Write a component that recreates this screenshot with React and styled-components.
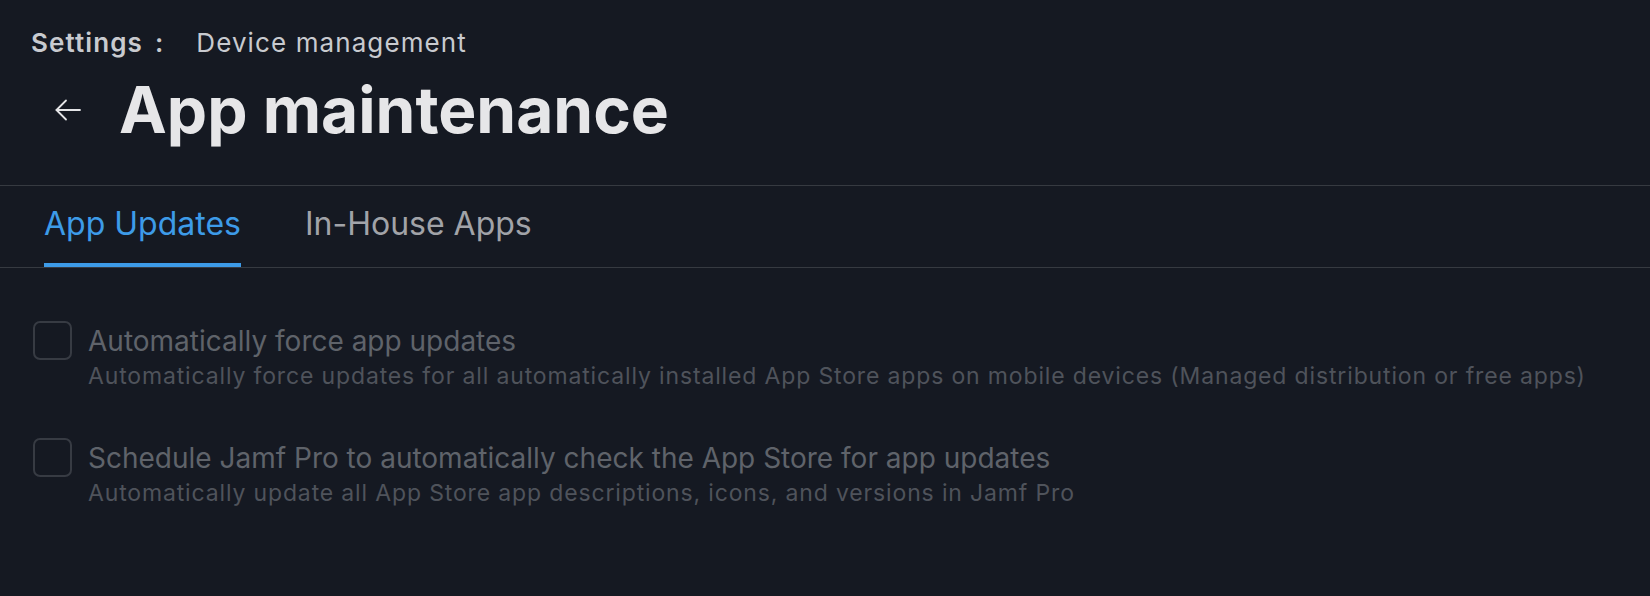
import React, { useState } from 'react';
import styled, { createGlobalStyle } from 'styled-components';

const GlobalStyle = createGlobalStyle`
  html, body {
    margin: 0;
    padding: 0;
    background: #151922;
  }
  body {
    font-family: Inter, "Noto Sans", sans-serif;
    color: #e4e5e7;
  }
`;

const Page = styled.div`
  min-height: 596px;
  background: #151922;
`;

const Header = styled.header`
  height: 186px;
  padding: 27px 0 0 31px;
  box-sizing: border-box;
  border-bottom: 1px solid #363a41;
`;

const Breadcrumb = styled.div`
  display: flex;
  align-items: center;
  font-size: 26px;
  line-height: 32px;
  letter-spacing: 1.1px;
  color: #c8cacf;
`;

const Crumb = styled.span`
  font-weight: ${p => (p.$strong ? 600 : 400)};
`;

const Sep = styled.span`
  margin: 0 32px 0 12px;
  font-weight: 600;
`;

const TitleRow = styled.div`
  display: flex;
  align-items: center;
  gap: 38px;
  margin-top: 12px;
  padding-left: 24px;
`;

const BackButton = styled.button`
  display: flex;
  align-items: center;
  justify-content: center;
  width: 26px;
  height: 26px;
  padding: 0;
  border: none;
  background: none;
  color: #e4e5e7;
  cursor: pointer;
`;

const Title = styled.h1`
  margin: 0;
  font-size: 64px;
  line-height: 78px;
  font-weight: 700;
  color: #e6e6e8;
`;

const Tabs = styled.nav`
  display: flex;
  gap: 64px;
  padding-left: 44px;
  border-bottom: 1px solid #363a41;
`;

const Tab = styled.button`
  position: relative;
  padding: 18px 0 23px;
  border: none;
  background: none;
  font-family: inherit;
  font-size: 32px;
  line-height: 40px;
  color: ${p => (p.$active ? '#3d9be8' : '#a1a3a8')};
  cursor: pointer;

  &::after {
    content: '';
    position: absolute;
    left: 0;
    right: 0;
    bottom: 0;
    height: 4px;
    background: ${p => (p.$active ? '#3d9be8' : 'transparent')};
  }
`;

const Options = styled.div`
  display: flex;
  flex-direction: column;
  gap: 47px;
  padding: 53px 0 0 33px;
`;

const Option = styled.label`
  display: flex;
  align-items: flex-start;
  gap: 16px;
  cursor: not-allowed;
`;

const Box = styled.span`
  flex: none;
  width: 39px;
  height: 39px;
  box-sizing: border-box;
  border: 2px solid #373b43;
  border-radius: 7px;
`;

const OptionText = styled.div`
  display: flex;
  flex-direction: column;
`;

const OptionLabel = styled.span`
  font-size: 28px;
  line-height: 40px;
  color: #5f636a;
`;

const OptionHint = styled.span`
  font-size: 23px;
  line-height: 30px;
  letter-spacing: 0.85px;
  color: #4f535b;
`;

const ArrowLeft = () => (
  <svg width="26" height="22" viewBox="0 0 26 22" fill="none" stroke="currentColor" strokeWidth="1.8" strokeLinecap="round" strokeLinejoin="round">
    <path d="M25 11H1.5" />
    <path d="M11 1.5L1.5 11L11 20.5" />
  </svg>
);

const options = [
  {
    label: 'Automatically force app updates',
    hint: 'Automatically force updates for all automatically installed App Store apps on mobile devices (Managed distribution or free apps)',
  },
  {
    label: 'Schedule Jamf Pro to automatically check the App Store for app updates',
    hint: 'Automatically update all App Store app descriptions, icons, and versions in Jamf Pro',
  },
];

export default function App() {
  const [tab, setTab] = useState('updates');
  return (
    <Page>
      <GlobalStyle />
      <Header>
        <Breadcrumb>
          <Crumb $strong>Settings</Crumb>
          <Sep>:</Sep>
          <Crumb>Device management</Crumb>
        </Breadcrumb>
        <TitleRow>
          <BackButton aria-label="Back">
            <ArrowLeft />
          </BackButton>
          <Title>App maintenance</Title>
        </TitleRow>
      </Header>
      <Tabs>
        <Tab $active={tab === 'updates'} onClick={() => setTab('updates')}>App Updates</Tab>
        <Tab $active={tab === 'inhouse'} onClick={() => setTab('inhouse')}>In-House Apps</Tab>
      </Tabs>
      <Options>
        {options.map(o => (
          <Option key={o.label}>
            <Box />
            <OptionText>
              <OptionLabel>{o.label}</OptionLabel>
              <OptionHint>{o.hint}</OptionHint>
            </OptionText>
          </Option>
        ))}
      </Options>
    </Page>
  );
}
